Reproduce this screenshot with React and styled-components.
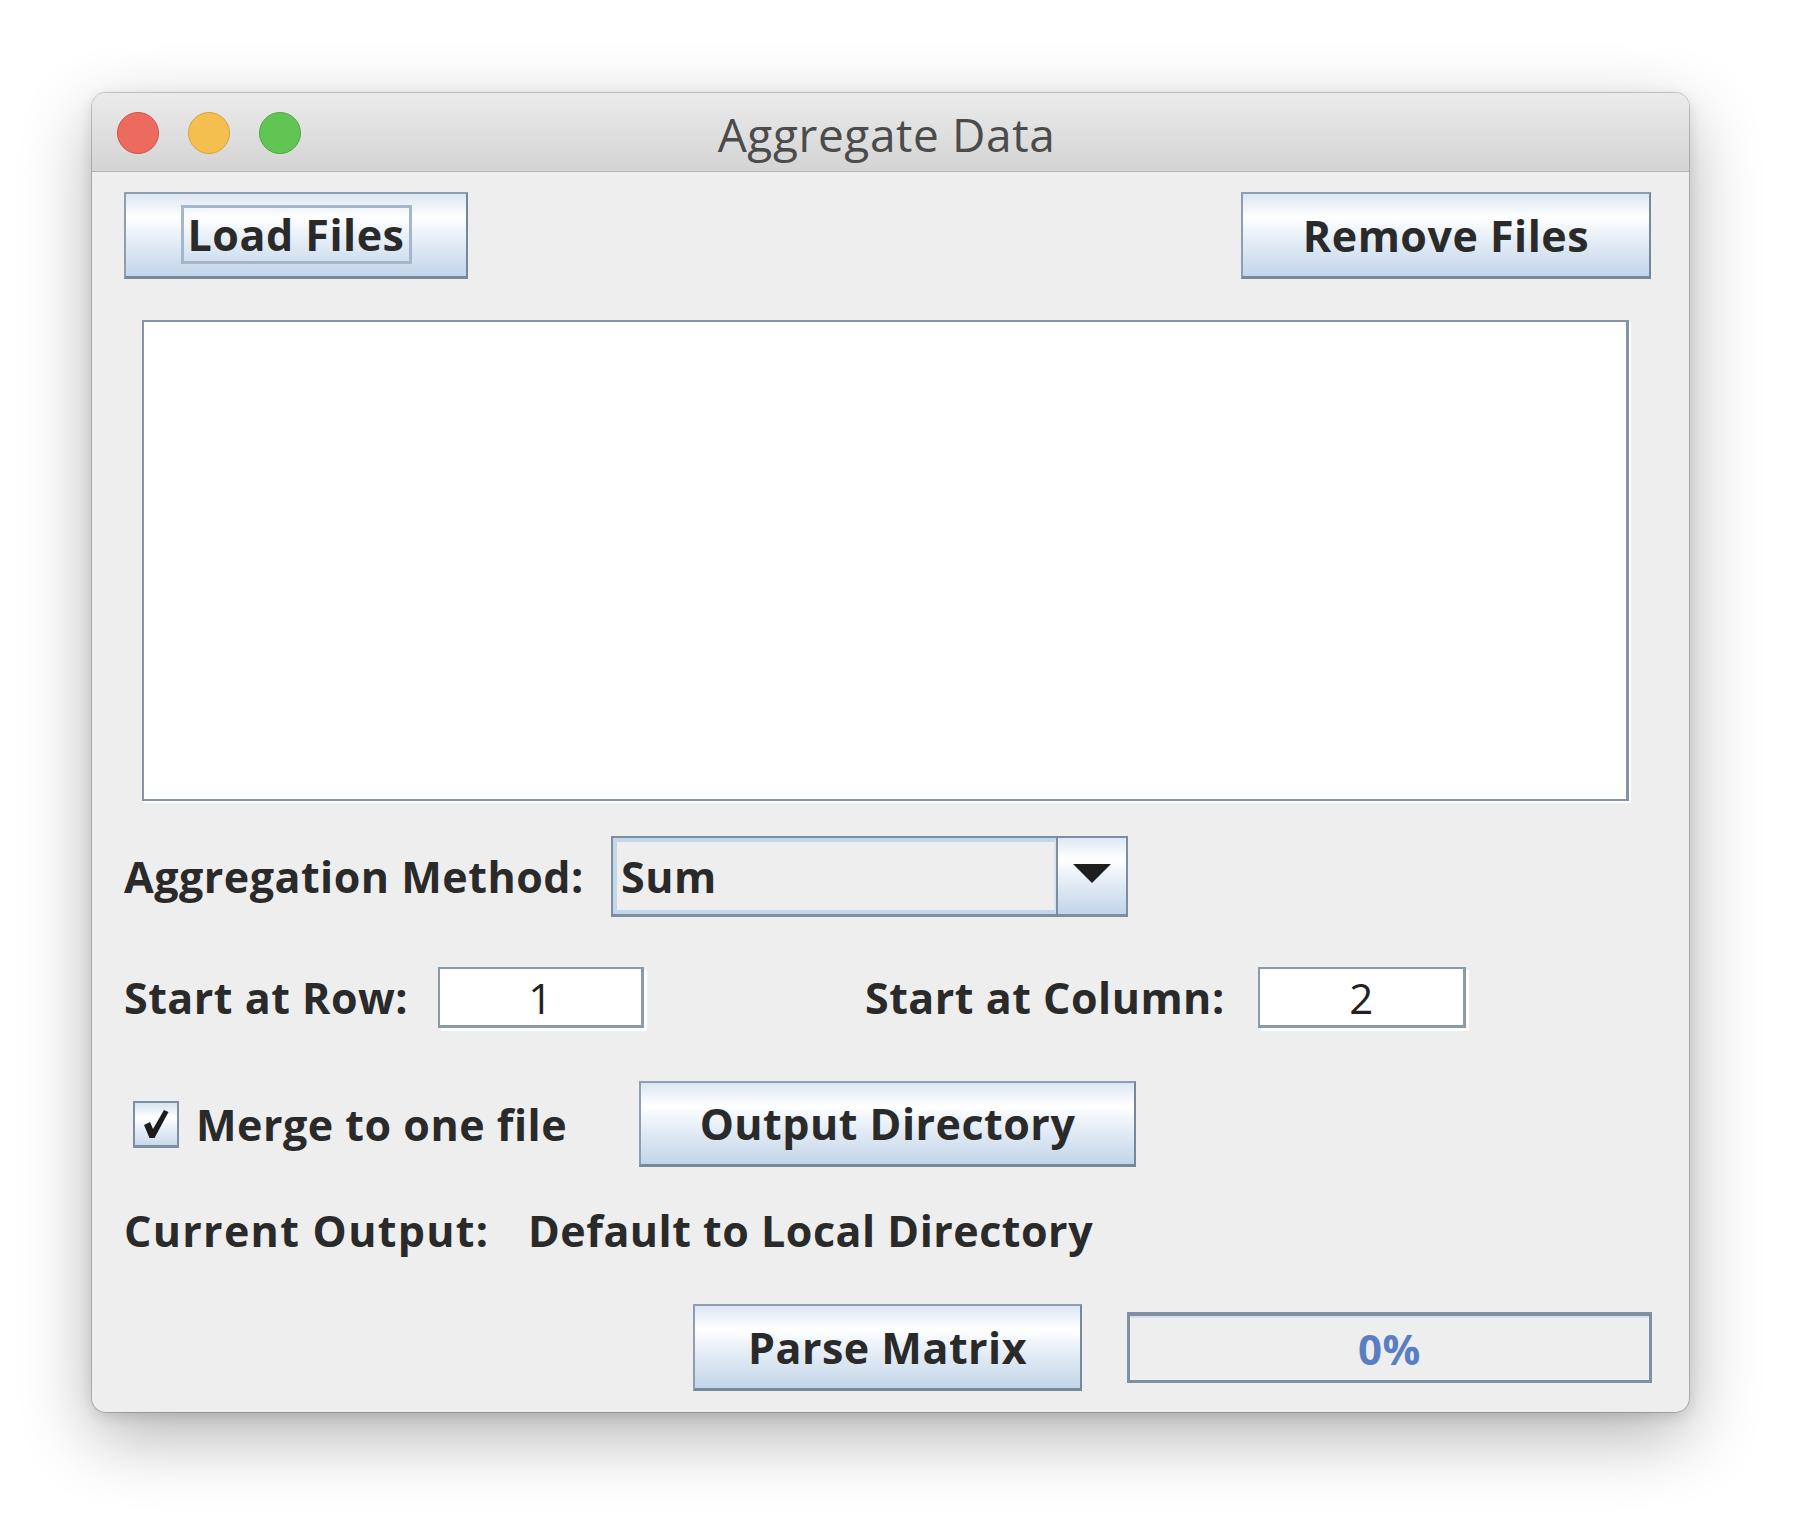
import React from 'react'
import styled, { createGlobalStyle } from 'styled-components'

const GlobalStyle = createGlobalStyle`
  html, body {
    margin: 0;
    padding: 0;
    background: #ffffff;
  }
  body {
    font-family: "Open Sans", "Noto Sans", "DejaVu Sans", sans-serif;
  }
`

function App() {
  const lights = [
    { fill: '#ec6a5e', edge: '#d25446' },
    { fill: '#f5bf4f', edge: '#d8a33f' },
    { fill: '#61c554', edge: '#4fa93d' },
  ]

  return (
    <Page>
      <GlobalStyle />
      <Window>
        <TitleBar>
          <Lights>
            {lights.map((l) => (
              <Light key={l.fill} fill={l.fill} edge={l.edge} />
            ))}
          </Lights>
          <Title>Aggregate Data</Title>
          <div />
        </TitleBar>

        <Content>
          <TopRow>
            <Button w="344px" h="87px">
              <FocusRing>Load Files</FocusRing>
            </Button>
            <Button w="410px" h="87px">Remove Files</Button>
          </TopRow>

          <FileList />

          <FieldRow mt="35px" h="81px">
            <Label w="487px">Aggregation Method:</Label>
            <Combo>
              <ComboValue>Sum</ComboValue>
              <ComboArrow>
                <svg width="38" height="19" viewBox="0 0 38 19">
                  <path d="M0 0 L38 0 L19 19 Z" fill="#1e1e1e" />
                </svg>
              </ComboArrow>
            </Combo>
          </FieldRow>

          <FieldRow mt="50px" h="61px">
            <Label w="314px">Start at Row:</Label>
            <NumberField w="206px">1</NumberField>
            <Label w="393px" ml="221px">Start at Column:</Label>
            <NumberField w="208px">2</NumberField>
          </FieldRow>

          <FieldRow mt="53px" h="86px">
            <CheckBox>
              <svg width="30" height="32" viewBox="0 0 30 32">
                <path d="M3 17 L9 14 L12 21 L23 2 L27.5 4 L13.5 30 L8.5 30 Z" fill="#1c1c1c" />
              </svg>
            </CheckBox>
            <Label w="443px" ml="17px">Merge to one file</Label>
            <Button w="497px" h="86px">Output Directory</Button>
          </FieldRow>

          <FieldRow mt="33px" h="60px">
            <Label w="404px" wide>Current Output:</Label>
            <Label>Default to Local Directory</Label>
          </FieldRow>

          <BottomRow>
            <Button w="389px" h="87px">Parse Matrix</Button>
            <Progress>0%</Progress>
          </BottomRow>
        </Content>
      </Window>
    </Page>
  )
}

export default App

const Page = styled.div`
  width: 1800px;
  height: 1523px;
  padding: 93px 0 0 92px;
  box-sizing: border-box;
  background: #ffffff;
`

const Window = styled.div`
  width: 1597px;
  height: 1319px;
  border-radius: 14px;
  overflow: hidden;
  background: #eeeeee;
  box-shadow: 0 0 0 1px rgba(0, 0, 0, 0.18), 0 24px 70px rgba(0, 0, 0, 0.3), 0 4px 14px rgba(0, 0, 0, 0.12);
  display: flex;
  flex-direction: column;
`

const TitleBar = styled.div`
  height: 78px;
  flex-shrink: 0;
  display: grid;
  grid-template-columns: 1fr auto 1fr;
  align-items: center;
  background: linear-gradient(#ebebeb, #d4d4d4);
  border-bottom: 1px solid #b3b3b3;
`

const Lights = styled.div`
  display: flex;
  gap: 29px;
  padding-left: 25px;
  padding-top: 2px;
`

const Light = styled.span`
  width: 40px;
  height: 40px;
  border-radius: 50%;
  background: ${(p) => p.fill};
  border: 1px solid ${(p) => p.edge};
`

const Title = styled.div`
  font-family: "Open Sans", "Noto Sans", sans-serif;
  font-size: 46px;
  letter-spacing: 0.6px;
  color: #4b4b4b;
  padding-top: 4px;
  margin-left: -8px;
`

const Content = styled.div`
  flex: 1;
  padding: 20px 38px 0 32px;
  display: flex;
  flex-direction: column;
  color: #2a2a2a;
  font-family: "Open Sans", "Noto Sans", sans-serif;
  font-weight: 700;
  font-size: 43px;
  letter-spacing: 0.5px;
`

const TopRow = styled.div`
  display: flex;
  justify-content: space-between;
`

const Button = styled.div`
  width: ${(p) => p.w};
  height: ${(p) => p.h};
  box-sizing: border-box;
  flex-shrink: 0;
  display: flex;
  align-items: center;
  justify-content: center;
  border: 2px solid #8d9eb1;
  border-right-color: #75879a;
  border-bottom: 3px solid #76889b;
  background: linear-gradient(#dbe6f2 0%, #ffffff 28%, #e6eef7 55%, #c2d5e9 100%);
  color: #2a2a2a;
  font-weight: 700;
  font-size: 43px;
  line-height: 1;
`

const FocusRing = styled.span`
  display: flex;
  align-items: center;
  justify-content: center;
  width: 231px;
  height: 59px;
  box-sizing: border-box;
  border: 3px solid #a3b6cc;
  margin-top: -2px;
`

const FileList = styled.div`
  margin: 41px 22px 0 18px;
  height: 481px;
  box-sizing: border-box;
  background: #ffffff;
  border: 2px solid #8494a6;
  border-right-width: 3px;
  box-shadow: 2px 2px 0 #ffffff;
`

const FieldRow = styled.div`
  display: flex;
  align-items: center;
  margin-top: ${(p) => p.mt};
  height: ${(p) => p.h};
`

const Label = styled.span`
  width: ${(p) => p.w || 'auto'};
  margin-left: ${(p) => p.ml || '0'};
  letter-spacing: ${(p) => (p.wide ? '1.3px' : 'inherit')};
  flex-shrink: 0;
  white-space: nowrap;
`

const Combo = styled.div`
  width: 517px;
  height: 81px;
  box-sizing: border-box;
  display: flex;
  border: 2px solid #7d8ea1;
  border-bottom-width: 3px;
`

const ComboValue = styled.div`
  flex: 1;
  display: flex;
  align-items: center;
  padding-left: 4px;
  background: #eeeeee;
  border: 4px solid #c4d6ea;
  border-right: 2px solid #d8e3ef;
`

const ComboArrow = styled.div`
  width: 68px;
  display: flex;
  align-items: center;
  justify-content: center;
  border-left: 2px solid #7d8ea1;
  background: linear-gradient(#dde8f3 0%, #ffffff 28%, #e6eef7 55%, #c2d5e9 100%);
  padding-bottom: 6px;
`

const NumberField = styled.div`
  width: ${(p) => p.w};
  height: 61px;
  box-sizing: border-box;
  flex-shrink: 0;
  display: flex;
  align-items: center;
  justify-content: center;
  background: #ffffff;
  border: 2px solid #8b9aab;
  border-bottom-width: 3px;
  border-right-width: 3px;
  box-shadow: 3px 3px 0 #ffffff;
  font-weight: 400;
  font-size: 42px;
  color: #222222;
`

const CheckBox = styled.div`
  width: 46px;
  height: 47px;
  margin-left: 9px;
  box-sizing: border-box;
  flex-shrink: 0;
  display: flex;
  align-items: center;
  justify-content: center;
  border: 2px solid #7c8ea2;
  border-bottom-width: 3px;
  background: linear-gradient(#d7e3f0, #ffffff 35%, #c8d9eb);
`

const BottomRow = styled.div`
  display: flex;
  align-items: center;
  justify-content: flex-end;
  gap: 45px;
  margin-top: 44px;
  margin-right: -1px;
`

const Progress = styled.div`
  width: 525px;
  height: 71px;
  box-sizing: border-box;
  display: flex;
  align-items: center;
  justify-content: center;
  background: #eeeeee;
  border: 3px solid #7f90a3;
  border-top: 4px solid #7f90a3;
  box-shadow: inset 0 2px 0 #d3dfec;
  color: #5a7ec4;
  font-size: 42px;
  font-weight: 700;
`
